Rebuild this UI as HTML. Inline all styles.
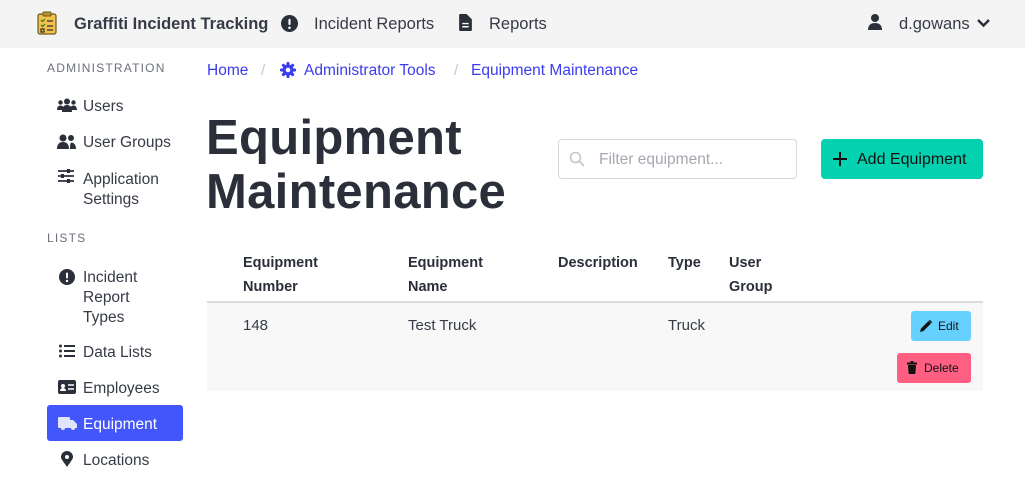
<!DOCTYPE html>
<html><head><style>
*{box-sizing:border-box;margin:0;padding:0}
body{width:1025px;height:483px;overflow:hidden;background:#fff;font-family:"Liberation Sans",sans-serif;color:#363b46;position:relative}
.hdr{position:absolute;left:0;top:0;width:1025px;height:48px;background:#f4f4f5}
.a{position:absolute;white-space:nowrap}
.nav{font-size:16.5px;color:#363b46}
.side{font-size:15.5px;color:#363b46}
.cap{font-size:12px;letter-spacing:1.2px;color:#6c717a}
.bc{font-size:15.5px;color:#3b3bf0}
</style></head><body>
<div class="hdr"></div>
<svg class="a" style="left:37px;top:11px" width="20" height="24" viewBox="0 0 20 24"><rect x="1" y="3" width="18" height="20" rx="2" fill="#f0c14b" stroke="#6b5a1f" stroke-width="1.2"/><rect x="6" y="1" width="8" height="4" rx="1" fill="#b8922e" stroke="#6b5a1f"/><path d="M4 9l1.5 1.5L8 8M4 14l1.5 1.5L8 13" stroke="#2a7a2a" fill="none" stroke-width="1.2"/><path d="M10 10h6M10 15h6M10 19h6M4 18h3v3H4z" stroke="#333" fill="none" stroke-width="1.2"/></svg>
<div class="a nav" style="left:74px;top:15px;font-weight:bold">Graffiti Incident Tracking</div>
<svg class="a" style="left:281px;top:15px" width="17" height="17" viewBox="0 0 16 16"><circle cx="8" cy="8" r="8" fill="#2a2f3a"/><rect x="7" y="3.5" width="2" height="6" rx="1" fill="#fff"/><circle cx="8" cy="12" r="1.2" fill="#fff"/></svg>
<div class="a nav" style="left:314px;top:15px">Incident Reports</div>
<svg class="a" style="left:459px;top:14px" width="13" height="17" viewBox="0 0 12 16"><path d="M1 0h6l5 5v10a1 1 0 0 1-1 1H1a1 1 0 0 1-1-1V1a1 1 0 0 1 1-1z" fill="#2a2f3a"/><path d="M3 9h6M3 12h6" stroke="#fff" stroke-width="1.3"/></svg>
<div class="a nav" style="left:489px;top:15px">Reports</div>
<svg class="a" style="left:868px;top:14px" width="14" height="16" viewBox="0 0 14 16"><circle cx="7" cy="4" r="4" fill="#2a2f3a"/><path d="M0 16c0-5 3-7 7-7s7 2 7 7z" fill="#2a2f3a"/></svg>
<div class="a nav" style="left:899px;top:15px">d.gowans</div>
<svg class="a" style="left:976px;top:18px" width="15" height="10" viewBox="0 0 15 10"><path d="M2 2l5.5 5.5L13 2" stroke="#2a2f3a" stroke-width="2.5" fill="none"/></svg>

<div class="a cap" style="left:47px;top:61px">ADMINISTRATION</div>
<svg class="a" style="left:57px;top:98px" width="20" height="14" viewBox="0 0 20 14"><circle cx="10" cy="3.5" r="3" fill="#2a2f3a"/><circle cx="3.5" cy="4.5" r="2.2" fill="#2a2f3a"/><circle cx="16.5" cy="4.5" r="2.2" fill="#2a2f3a"/><path d="M5 14c0-5 2-7 5-7s5 2 5 7zM0 12c0-3 1.5-4.5 3.5-4.5S7 9 7 12zM13 12c0-3 1.5-4.5 3.5-4.5S20 9 20 12z" fill="#2a2f3a"/></svg>
<div class="a side" style="left:83px;top:98px">Users</div>
<svg class="a" style="left:57px;top:134px" width="19" height="15" viewBox="0 0 19 15"><circle cx="6" cy="4" r="3.5" fill="#2a2f3a"/><circle cx="14" cy="4" r="3" fill="#2a2f3a"/><path d="M0 15c0-5 2.5-7 6-7s6 2 6 7zM13 15c0-3 0-5 1-6.5 3 0 5 2 5 6.5z" fill="#2a2f3a"/></svg>
<div class="a side" style="left:83px;top:134px">User Groups</div>
<svg class="a" style="left:58px;top:169px" width="16" height="14" viewBox="0 0 16 14"><path d="M0 2h16M0 7h16M0 12h16" stroke="#2a2f3a" stroke-width="1.8"/><rect x="9" y="0" width="3" height="4" fill="#2a2f3a"/><rect x="3" y="5" width="3" height="4" fill="#2a2f3a"/><rect x="9" y="10" width="3" height="4" fill="#2a2f3a"/></svg>
<div class="a side" style="left:83px;top:170px;line-height:20px">Application<br>Settings</div>
<div class="a cap" style="left:47px;top:231px">LISTS</div>
<svg class="a" style="left:59px;top:269px" width="16" height="16" viewBox="0 0 16 16"><circle cx="8" cy="8" r="8" fill="#2a2f3a"/><rect x="7" y="3.5" width="2" height="6" rx="1" fill="#fff"/><circle cx="8" cy="12" r="1.2" fill="#fff"/></svg>
<div class="a side" style="left:83px;top:268px;line-height:20px">Incident<br>Report<br>Types</div>
<svg class="a" style="left:59px;top:344px" width="16" height="14" viewBox="0 0 16 14"><circle cx="1.5" cy="2" r="1.5" fill="#2a2f3a"/><circle cx="1.5" cy="7" r="1.5" fill="#2a2f3a"/><circle cx="1.5" cy="12" r="1.5" fill="#2a2f3a"/><path d="M5 2h11M5 7h11M5 12h11" stroke="#2a2f3a" stroke-width="2"/></svg>
<div class="a side" style="left:83px;top:344px">Data Lists</div>
<svg class="a" style="left:58px;top:380px" width="18" height="14" viewBox="0 0 18 14"><rect width="18" height="14" rx="2" fill="#2a2f3a"/><circle cx="5" cy="6" r="2" fill="#fff"/><path d="M2 11c0-2 1.5-3 3-3s3 1 3 3z" fill="#fff"/><path d="M10 5h6M10 9h6" stroke="#fff" stroke-width="1.5"/></svg>
<div class="a side" style="left:83px;top:380px">Employees</div>
<div class="a" style="left:47px;top:405px;width:136px;height:36px;background:#4356fb;border-radius:3px"></div>
<svg class="a" style="left:58px;top:417px" width="19" height="14" viewBox="0 0 19 14"><path d="M0 1a1 1 0 0 1 1-1h10a1 1 0 0 1 1 1v2h3l4 4v4h-2a2 2 0 0 1-4 0H7a2 2 0 0 1-4 0H1a1 1 0 0 1-1-1z" fill="#e0e4ff"/></svg>
<div class="a side" style="left:83px;top:416px;color:#fff">Equipment</div>
<svg class="a" style="left:61px;top:451px" width="12" height="16" viewBox="0 0 12 16"><path d="M6 16C2 10 0 8 0 6a6 6 0 0 1 12 0c0 2-2 4-6 10z" fill="#2a2f3a"/><circle cx="6" cy="6" r="2" fill="#fff"/></svg>
<div class="a side" style="left:83px;top:452px">Locations</div>

<div class="a bc" style="left:207px;top:62px">Home</div>
<div class="a" style="left:261px;top:62px;font-size:15px;color:#c8c8cc">/</div>
<svg class="a" style="left:280px;top:62px" width="16" height="16" viewBox="0 0 16 16"><g fill="#3b3bf0"><circle cx="8" cy="8" r="5.5"/><rect x="6.5" y="0" width="3" height="16" rx="1"/><rect x="0" y="6.5" width="16" height="3" rx="1"/><rect x="6.5" y="0" width="3" height="16" rx="1" transform="rotate(45 8 8)"/><rect x="6.5" y="0" width="3" height="16" rx="1" transform="rotate(-45 8 8)"/></g><circle cx="8" cy="8" r="2.3" fill="#fff"/></svg>
<div class="a bc" style="left:304px;top:62px">Administrator Tools</div>
<div class="a" style="left:454px;top:62px;font-size:15px;color:#c8c8cc">/</div>
<div class="a bc" style="left:471px;top:62px">Equipment Maintenance</div>

<div class="a" style="left:206px;top:111px;font-size:49px;font-weight:bold;line-height:54px;color:#2a2f3a;letter-spacing:0.3px">Equipment<br>Maintenance</div>

<div class="a" style="left:558px;top:139px;width:239px;height:40px;border:1px solid #d8d8dc;border-radius:4px;background:#fff"></div>
<svg class="a" style="left:569px;top:151px" width="16" height="16" viewBox="0 0 16 16"><circle cx="6.5" cy="6.5" r="5" stroke="#c4c6cc" stroke-width="1.6" fill="none"/><path d="M10 10l5 5" stroke="#c4c6cc" stroke-width="1.8"/></svg>
<div class="a" style="left:599px;top:151px;font-size:15.5px;color:#a4a8b0">Filter equipment...</div>
<div class="a" style="left:821px;top:139px;width:162px;height:40px;background:#04d1b0;border-radius:4px"></div>
<svg class="a" style="left:833px;top:152px" width="14" height="14" viewBox="0 0 14 14"><path d="M7 0v14M0 7h14" stroke="#111" stroke-width="2"/></svg>
<div class="a" style="left:857px;top:151px;font-size:16px;color:#111">Add Equipment</div>

<div class="a" style="left:243px;top:251px;font-size:14.5px;font-weight:bold;line-height:24px;color:#2a2f3a">Equipment<br>Number</div>
<div class="a" style="left:408px;top:251px;font-size:14.5px;font-weight:bold;line-height:24px;color:#2a2f3a">Equipment<br>Name</div>
<div class="a" style="left:558px;top:251px;font-size:14.5px;font-weight:bold;line-height:24px;color:#2a2f3a">Description</div>
<div class="a" style="left:668px;top:251px;font-size:14.5px;font-weight:bold;line-height:24px;color:#2a2f3a">Type</div>
<div class="a" style="left:729px;top:251px;font-size:14.5px;font-weight:bold;line-height:24px;color:#2a2f3a">User<br>Group</div>
<div class="a" style="left:207px;top:301px;width:776px;height:2px;background:#dbdde1"></div>
<div class="a" style="left:207px;top:303px;width:776px;height:88px;background:#f8f8f9"></div>
<div class="a" style="left:243px;top:317px;font-size:15px">148</div>
<div class="a" style="left:408px;top:317px;font-size:15px">Test Truck</div>
<div class="a" style="left:668px;top:317px;font-size:15px">Truck</div>
<div class="a" style="left:911px;top:311px;width:60px;height:30px;background:#66d1ff;border-radius:3px"></div>
<svg class="a" style="left:920px;top:320px" width="12" height="12" viewBox="0 0 12 12"><path d="M0 12l1-3.5L8.5 1l2.5 2.5L3.5 11z" fill="#111"/><path d="M9.3 0.3l2.4 2.4" stroke="#111" stroke-width="1.4"/></svg>
<div class="a" style="left:938px;top:319px;font-size:12px;color:#111">Edit</div>
<div class="a" style="left:897px;top:353px;width:74px;height:30px;background:#ff5f82;border-radius:3px"></div>
<svg class="a" style="left:907px;top:361px" width="10" height="13" viewBox="0 0 10 13"><rect x="0" y="1.5" width="10" height="2" fill="#111"/><rect x="3.5" y="0" width="3" height="2" fill="#111"/><path d="M1 4h8l-.7 9H1.7z" fill="#111"/></svg>
<div class="a" style="left:924px;top:361px;font-size:12px;color:#111">Delete</div>
</body></html>
